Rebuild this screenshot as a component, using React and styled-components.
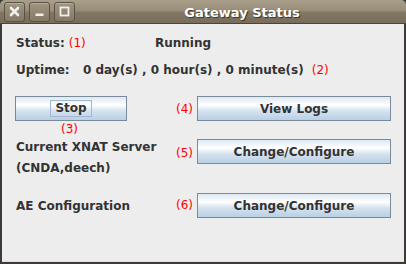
import React from "react";
import styled, { createGlobalStyle } from "styled-components";

const GlobalStyle = createGlobalStyle`
  html, body {
    margin: 0;
    padding: 0;
    background: #3c3b37;
  }
  body {
    font-family: "DejaVu Sans", "Liberation Sans", sans-serif;
  }
`;

export default function App() {
  const actions = [
    { id: 4, label: null, text: "View Logs", height: 43, drop: 1 },
    { id: 5, label: ["Current XNAT Server", "(CNDA,deech)"], text: "Change/Configure", height: 54, drop: 2 },
    { id: 6, label: ["AE Configuration"], text: "Change/Configure", height: 25, drop: 0 },
  ];

  return (
    <>
      <GlobalStyle />
      <Window>
        <TitleBar>
          <TitleButtons>
            <TitleButton aria-label="close">
              <svg width="11" height="11" viewBox="0 0 11 11">
                <path d="M2 2 L9 9 M9 2 L2 9" stroke="#f2f0ec" strokeWidth="2.6" strokeLinecap="round" />
              </svg>
            </TitleButton>
            <TitleButton aria-label="minimize">
              <svg width="11" height="11" viewBox="0 0 11 11">
                <rect x="1.5" y="7.5" width="8" height="2.5" fill="#f2f0ec" />
              </svg>
            </TitleButton>
            <TitleButton aria-label="maximize">
              <svg width="11" height="11" viewBox="0 0 11 11">
                <rect x="1.5" y="1.5" width="8" height="8" fill="none" stroke="#f2f0ec" strokeWidth="1.8" />
              </svg>
            </TitleButton>
          </TitleButtons>
          <Title>Gateway Status</Title>
        </TitleBar>

        <Panel>
          <InfoRow>
            <InfoLabel $width={139}>
              Status:<Marker $inline>(1)</Marker>
            </InfoLabel>
            <Text>Running</Text>
          </InfoRow>
          <InfoRow $top={7}>
            <InfoLabel $width={67}>Uptime:</InfoLabel>
            <Text>0 day(s) , 0 hour(s) , 0 minute(s)</Text>
            <Marker $gap={8}>(2)</Marker>
          </InfoRow>

          <Actions>
            {actions.map(({ id, label, text, height, drop }) => (
              <ActionRow key={id} $height={height}>
                <LabelCell>
                  {label ? (
                    <ActionLabel $multi={label.length > 1}>
                      {label.map((line) => (
                        <div key={line}>{line}</div>
                      ))}
                    </ActionLabel>
                  ) : (
                    <StopBox>
                      <Button $width={112}>
                        <Focus>Stop</Focus>
                      </Button>
                      <UnderMarker>(3)</UnderMarker>
                    </StopBox>
                  )}
                </LabelCell>
                <SideMarker $drop={drop}>({id})</SideMarker>
                <Button $width={194}>{text}</Button>
              </ActionRow>
            ))}
          </Actions>
        </Panel>
      </Window>
    </>
  );
}

const Window = styled.div`
  width: 406px;
  height: 264px;
  display: flex;
  flex-direction: column;
  background: #3c3b37;
  border-radius: 5px 5px 0 0;
  overflow: hidden;
`;

const TitleBar = styled.div`
  height: 24px;
  flex-shrink: 0;
  display: flex;
  align-items: center;
  background: linear-gradient(#aa9f8a 0%, #988d78 45%, #827763 55%, #786d5b 100%);
  border-bottom: 1px solid #4a453c;
  box-sizing: border-box;
`;

const TitleButtons = styled.div`
  display: flex;
  gap: 4px;
  padding-left: 4px;
  width: 78px;
  box-sizing: border-box;
`;

const TitleButton = styled.div`
  width: 21px;
  height: 20px;
  box-sizing: border-box;
  border: 1px solid #5a5244;
  border-radius: 3px;
  background: linear-gradient(#a0957f, #857a66);
  box-shadow: inset 0 1px 0 rgba(255, 255, 255, 0.25);
  display: flex;
  align-items: center;
  justify-content: center;
`;

const Title = styled.div`
  flex: 1;
  text-align: center;
  color: #ffffff;
  font-weight: bold;
  font-size: 13px;
  text-shadow: 1px 1px 1px #3a3329;
  margin-top: 1px;
`;

const Panel = styled.div`
  flex: 1;
  background: #ededed;
  margin: 0 2px 2px 2px;
  padding: 9px 0 0 14px;
  border-bottom: 1px solid #e2ddd0;
  color: #333333;
  font-size: 12px;
  font-weight: bold;
`;

const InfoRow = styled.div`
  display: flex;
  height: 20px;
  line-height: 20px;
  margin-top: ${(p) => p.$top || 0}px;
`;

const InfoLabel = styled.div`
  width: ${(p) => p.$width}px;
  flex-shrink: 0;
`;

const Text = styled.span`
  white-space: nowrap;
`;

const Marker = styled.span`
  color: #ff0000;
  font-weight: normal;
  margin-left: ${(p) => (p.$inline ? 4 : p.$gap || 0)}px;
`;

const Actions = styled.div`
  margin-top: 16px;
  margin-left: -1px;
  display: flex;
  flex-direction: column;
`;

const ActionRow = styled.div`
  display: flex;
  align-items: flex-start;
  height: ${(p) => p.$height}px;
`;

const LabelCell = styled.div`
  width: 161px;
  flex-shrink: 0;
`;

const ActionLabel = styled.div`
  padding-left: 1px;
  line-height: ${(p) => (p.$multi ? 21 : 25)}px;
  margin-top: ${(p) => (p.$multi ? -2 : 1)}px;
  white-space: nowrap;
`;

const StopBox = styled.div`
  width: 112px;
  display: flex;
  flex-direction: column;
  align-items: center;
`;

const UnderMarker = styled.div`
  color: #ff0000;
  font-weight: normal;
  line-height: 16px;
  margin-right: 3px;
`;

const SideMarker = styled.div`
  width: 21px;
  flex-shrink: 0;
  color: #ff0000;
  font-weight: normal;
  line-height: 25px;
  padding-top: ${(p) => p.$drop}px;
  box-sizing: border-box;
`;

const Button = styled.div`
  width: ${(p) => p.$width}px;
  height: 25px;
  box-sizing: border-box;
  border: 1px solid #7a8a99;
  background: linear-gradient(#dde8f3 0%, #ffffff 35%, #d6e3ef 60%, #b8cfe5 100%);
  display: flex;
  align-items: center;
  justify-content: center;
  color: #333333;
  font-weight: bold;
  font-size: 12px;
  white-space: nowrap;
`;

const Focus = styled.span`
  border: 1px solid #a3b8cc;
  padding: 0 4px;
  line-height: 15px;
`;
